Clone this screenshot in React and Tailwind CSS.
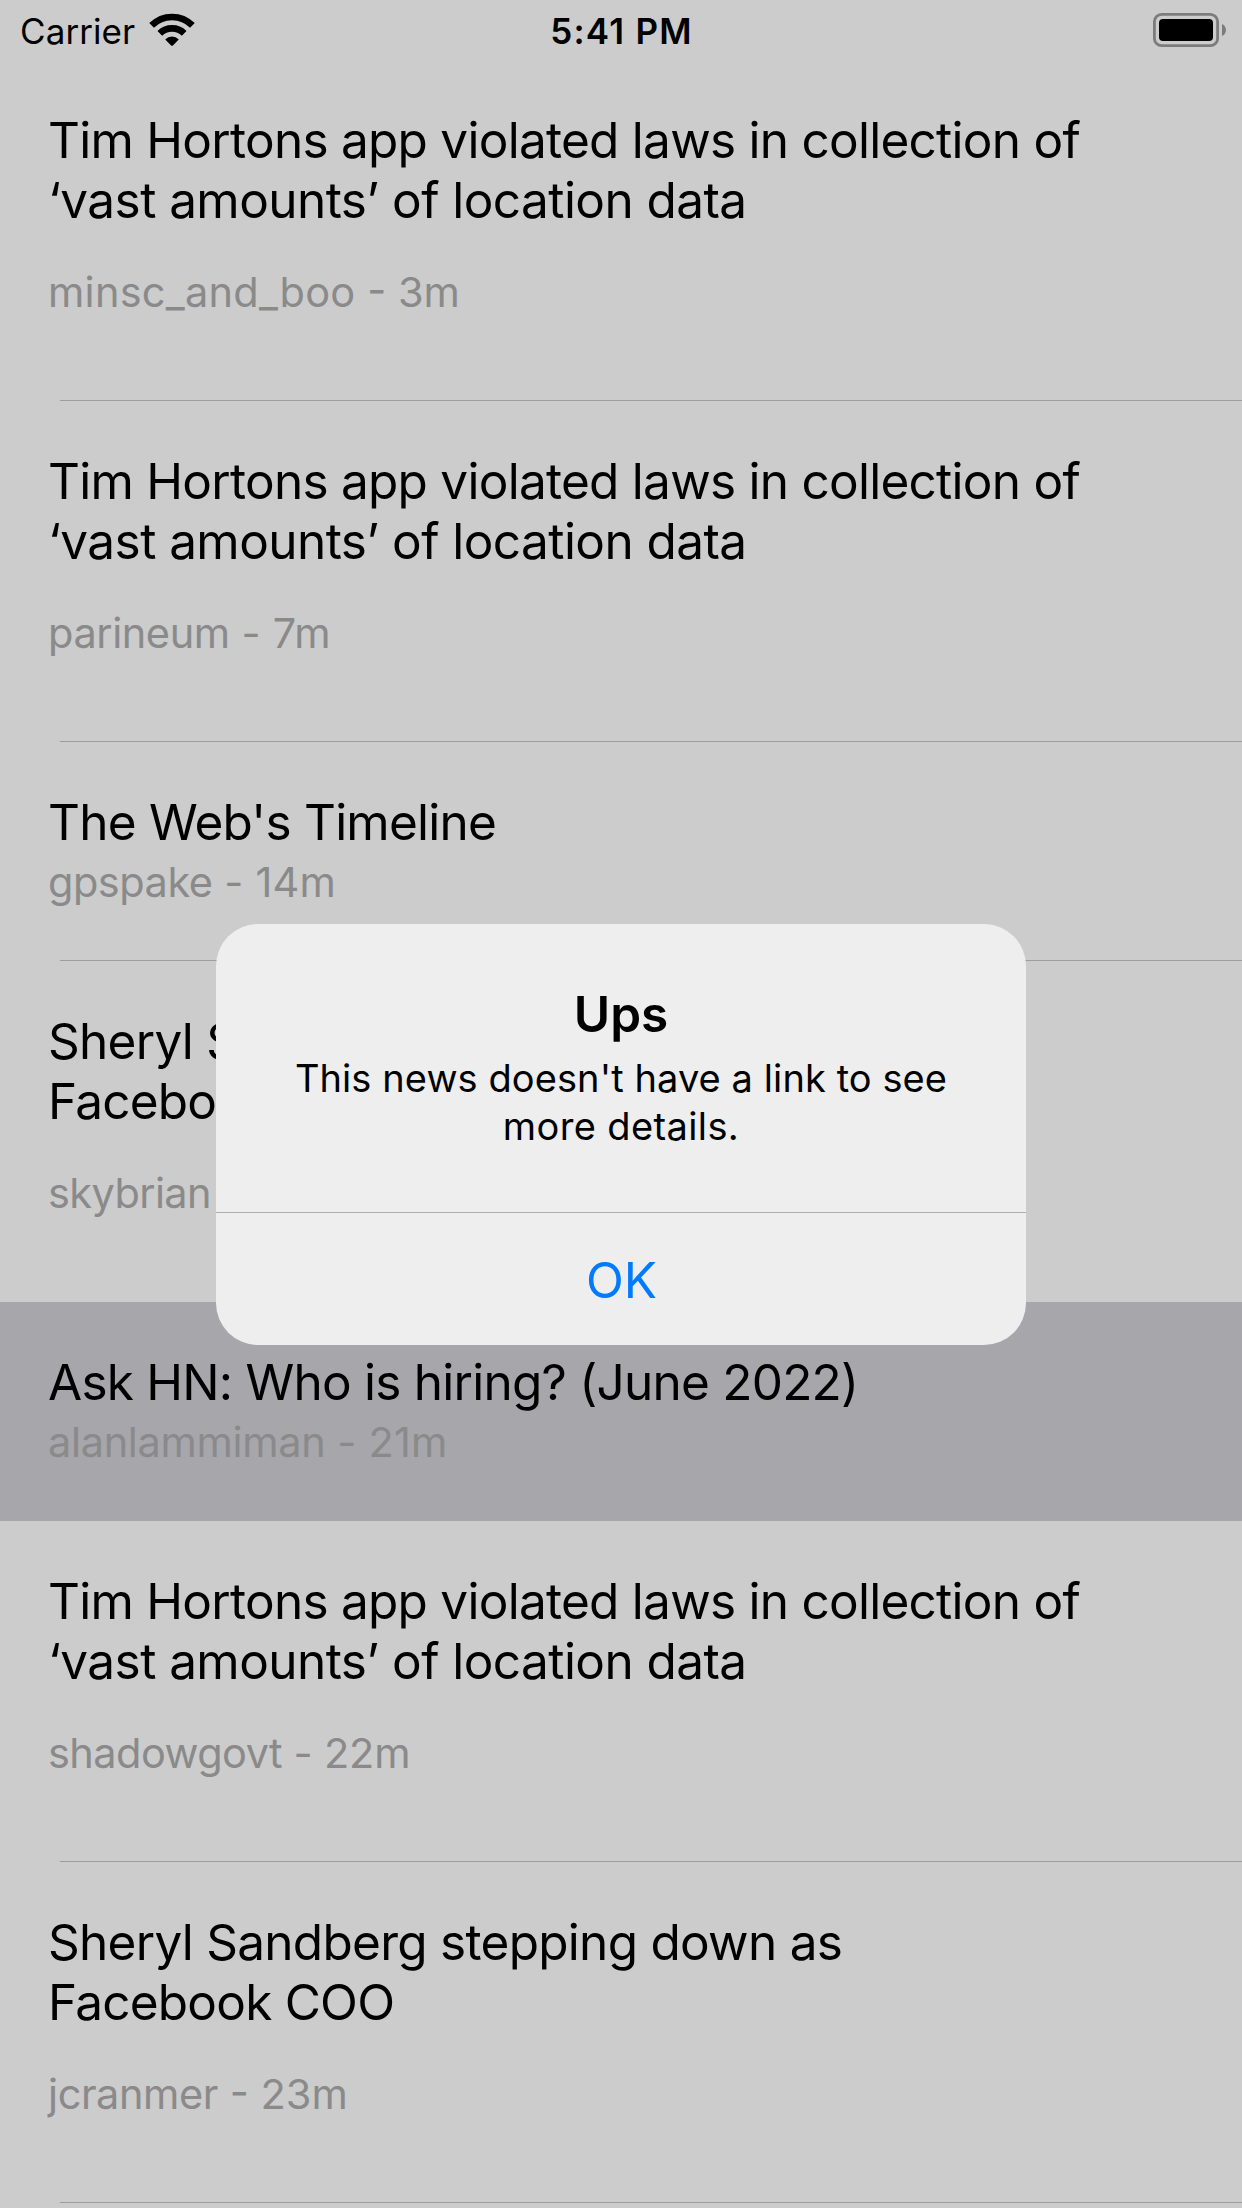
const TIM = [
  { text: "Tim Hortons app violated laws in collection of", tracking: "tracking-[-0.735px]" },
  { text: "‘vast amounts’ of location data", tracking: "tracking-[-0.565px]" },
];

const SHERYL = [
  { text: "Sheryl Sandberg stepping down as", tracking: "tracking-[-0.72px]" },
  { text: "Facebook COO", tracking: "tracking-[-0.78px]" },
];

const STORIES = [
  { title: TIM, author: "minsc_and_boo", age: " - 3m", authorTracking: "tracking-[0.25px]", ageTracking: "tracking-[0px]" },
  { title: TIM, author: "parineum", age: " - 7m", authorTracking: "tracking-[-0.42px]" },
  {
    title: [{ text: "The Web's Timeline", tracking: "tracking-[-0.764px]" }],
    author: "gpspake",
    age: " - 14m",
    authorTracking: "tracking-[-0.5px]",
  },
  { title: SHERYL, author: "skybrian", age: "", authorTracking: "tracking-[-0.6px]", noDivider: true },
  {
    title: [{ text: "Ask HN: Who is hiring? (June 2022)", tracking: "tracking-[-0.764px]" }],
    author: "alanlammiman",
    age: " - 21m",
    authorTracking: "tracking-[-0.34px]",
    selected: true,
    noDivider: true,
  },
  {
    title: TIM,
    author: "shadowgovt",
    age: " - 22m",
    authorTracking: "tracking-[-0.55px]",
    ageTracking: "tracking-[-0.18px]",
  },
  {
    title: SHERYL,
    author: "jcranmer",
    age: " - 23m",
    authorTracking: "tracking-[-0.42px]",
    ageTracking: "tracking-[0px]",
  },
];

function WifiIcon() {
  return (
    <svg className="ml-[14px] h-[34px] w-[46px]" viewBox="0 0 46 34" fill="none">
      <path d="M2.6 12.4 A28.8 28.8 0 0 1 43.4 12.4" stroke="#000" strokeWidth="6.6" />
      <path d="M10.8 20.4 A17.3 17.3 0 0 1 35.2 20.4" stroke="#000" strokeWidth="6.6" />
      <path d="M16.2 26.4 A9.7 9.7 0 0 1 29.8 26.4 L23.9 32.4 Q23 33.3 22.1 32.4 Z" fill="#000" />
    </svg>
  );
}

function BatteryIcon() {
  return (
    <svg className="h-[34px] w-[73px]" viewBox="0 0 73 34">
      <rect x="1.4" y="1.4" width="63.2" height="31.2" rx="7.2" fill="none" stroke="#7c7c7c" strokeWidth="2.8" />
      <rect x="6" y="6" width="54" height="22" rx="4" fill="#000" />
      <path d="M69 11 C74.3 13 74.3 21 69 23 Z" fill="#7c7c7c" />
    </svg>
  );
}

function StatusBar() {
  return (
    <header className="grid h-[60px] grid-cols-[1fr_auto_1fr] items-start pt-2.5 pr-4 pl-5 text-[35px] leading-[42px]">
      <div className="flex items-start">
        <span className="tracking-[0.08px]">Carrier</span>
        <span className="pt-[3px]">
          <WifiIcon />
        </span>
      </div>
      <div className="pr-[3px] text-center font-semibold tracking-[1.25px]">5:41 PM</div>
      <div className="flex justify-end pt-[3px]">
        <BatteryIcon />
      </div>
    </header>
  );
}

function Story({ title, author, age, authorTracking, ageTracking, selected, noDivider }) {
  const long = title.length > 1;
  return (
    <li className={`flex flex-col ${long ? "h-[341px]" : "h-[219px]"} ${selected ? "bg-[#a7a6ab]" : ""}`}>
      <div className={`flex grow flex-col pt-[50px] pl-12 ${long ? "gap-9" : "gap-1"}`}>
        <h2 className="text-[49.5px] leading-[60px] whitespace-nowrap text-black">
          {title.map((line) => (
            <span key={line.text} className={`block ${line.tracking}`}>
              {line.text}
            </span>
          ))}
        </h2>
        <p className="text-[41.5px] leading-[52px] whitespace-pre text-[#8a8a8b]">
          <span className={authorTracking}>{author}</span>
          <span className={ageTracking || "tracking-[0.2px]"}>{age}</span>
        </p>
      </div>
      {!noDivider && <div className="ml-[60px] h-px bg-[#9d9d9f]" />}
    </li>
  );
}

function Alert() {
  return (
    <div className="absolute inset-x-0 top-[924px] flex justify-center">
      <div role="alertdialog" className="h-[421px] w-[810px] overflow-hidden rounded-[42px] bg-[#eeeeee] text-center">
        <div className="flex h-72 flex-col gap-2.5 pt-[60px]">
          <h1 className="text-[49.5px] leading-[60px] font-semibold">Ups</h1>
          <p className="text-[38px] leading-[48px]">
            <span className="block tracking-[0.09px]">This news doesn't have a link to see</span>
            <span className="block tracking-[0.38px]">more details.</span>
          </p>
        </div>
        <div className="h-px bg-[#adadaf]" />
        <button className="block h-[132px] w-full pt-px pl-px text-[49.5px] leading-[60px] text-[#007aff]">OK</button>
      </div>
    </div>
  );
}

export default function App() {
  return (
    <div className="relative h-[2208px] w-[1242px] overflow-hidden bg-[#cccccc] font-['Inter',sans-serif] text-black">
      <StatusBar />
      <ul>
        {STORIES.map((story) => (
          <Story key={story.author} {...story} />
        ))}
      </ul>
      <Alert />
    </div>
  );
}
